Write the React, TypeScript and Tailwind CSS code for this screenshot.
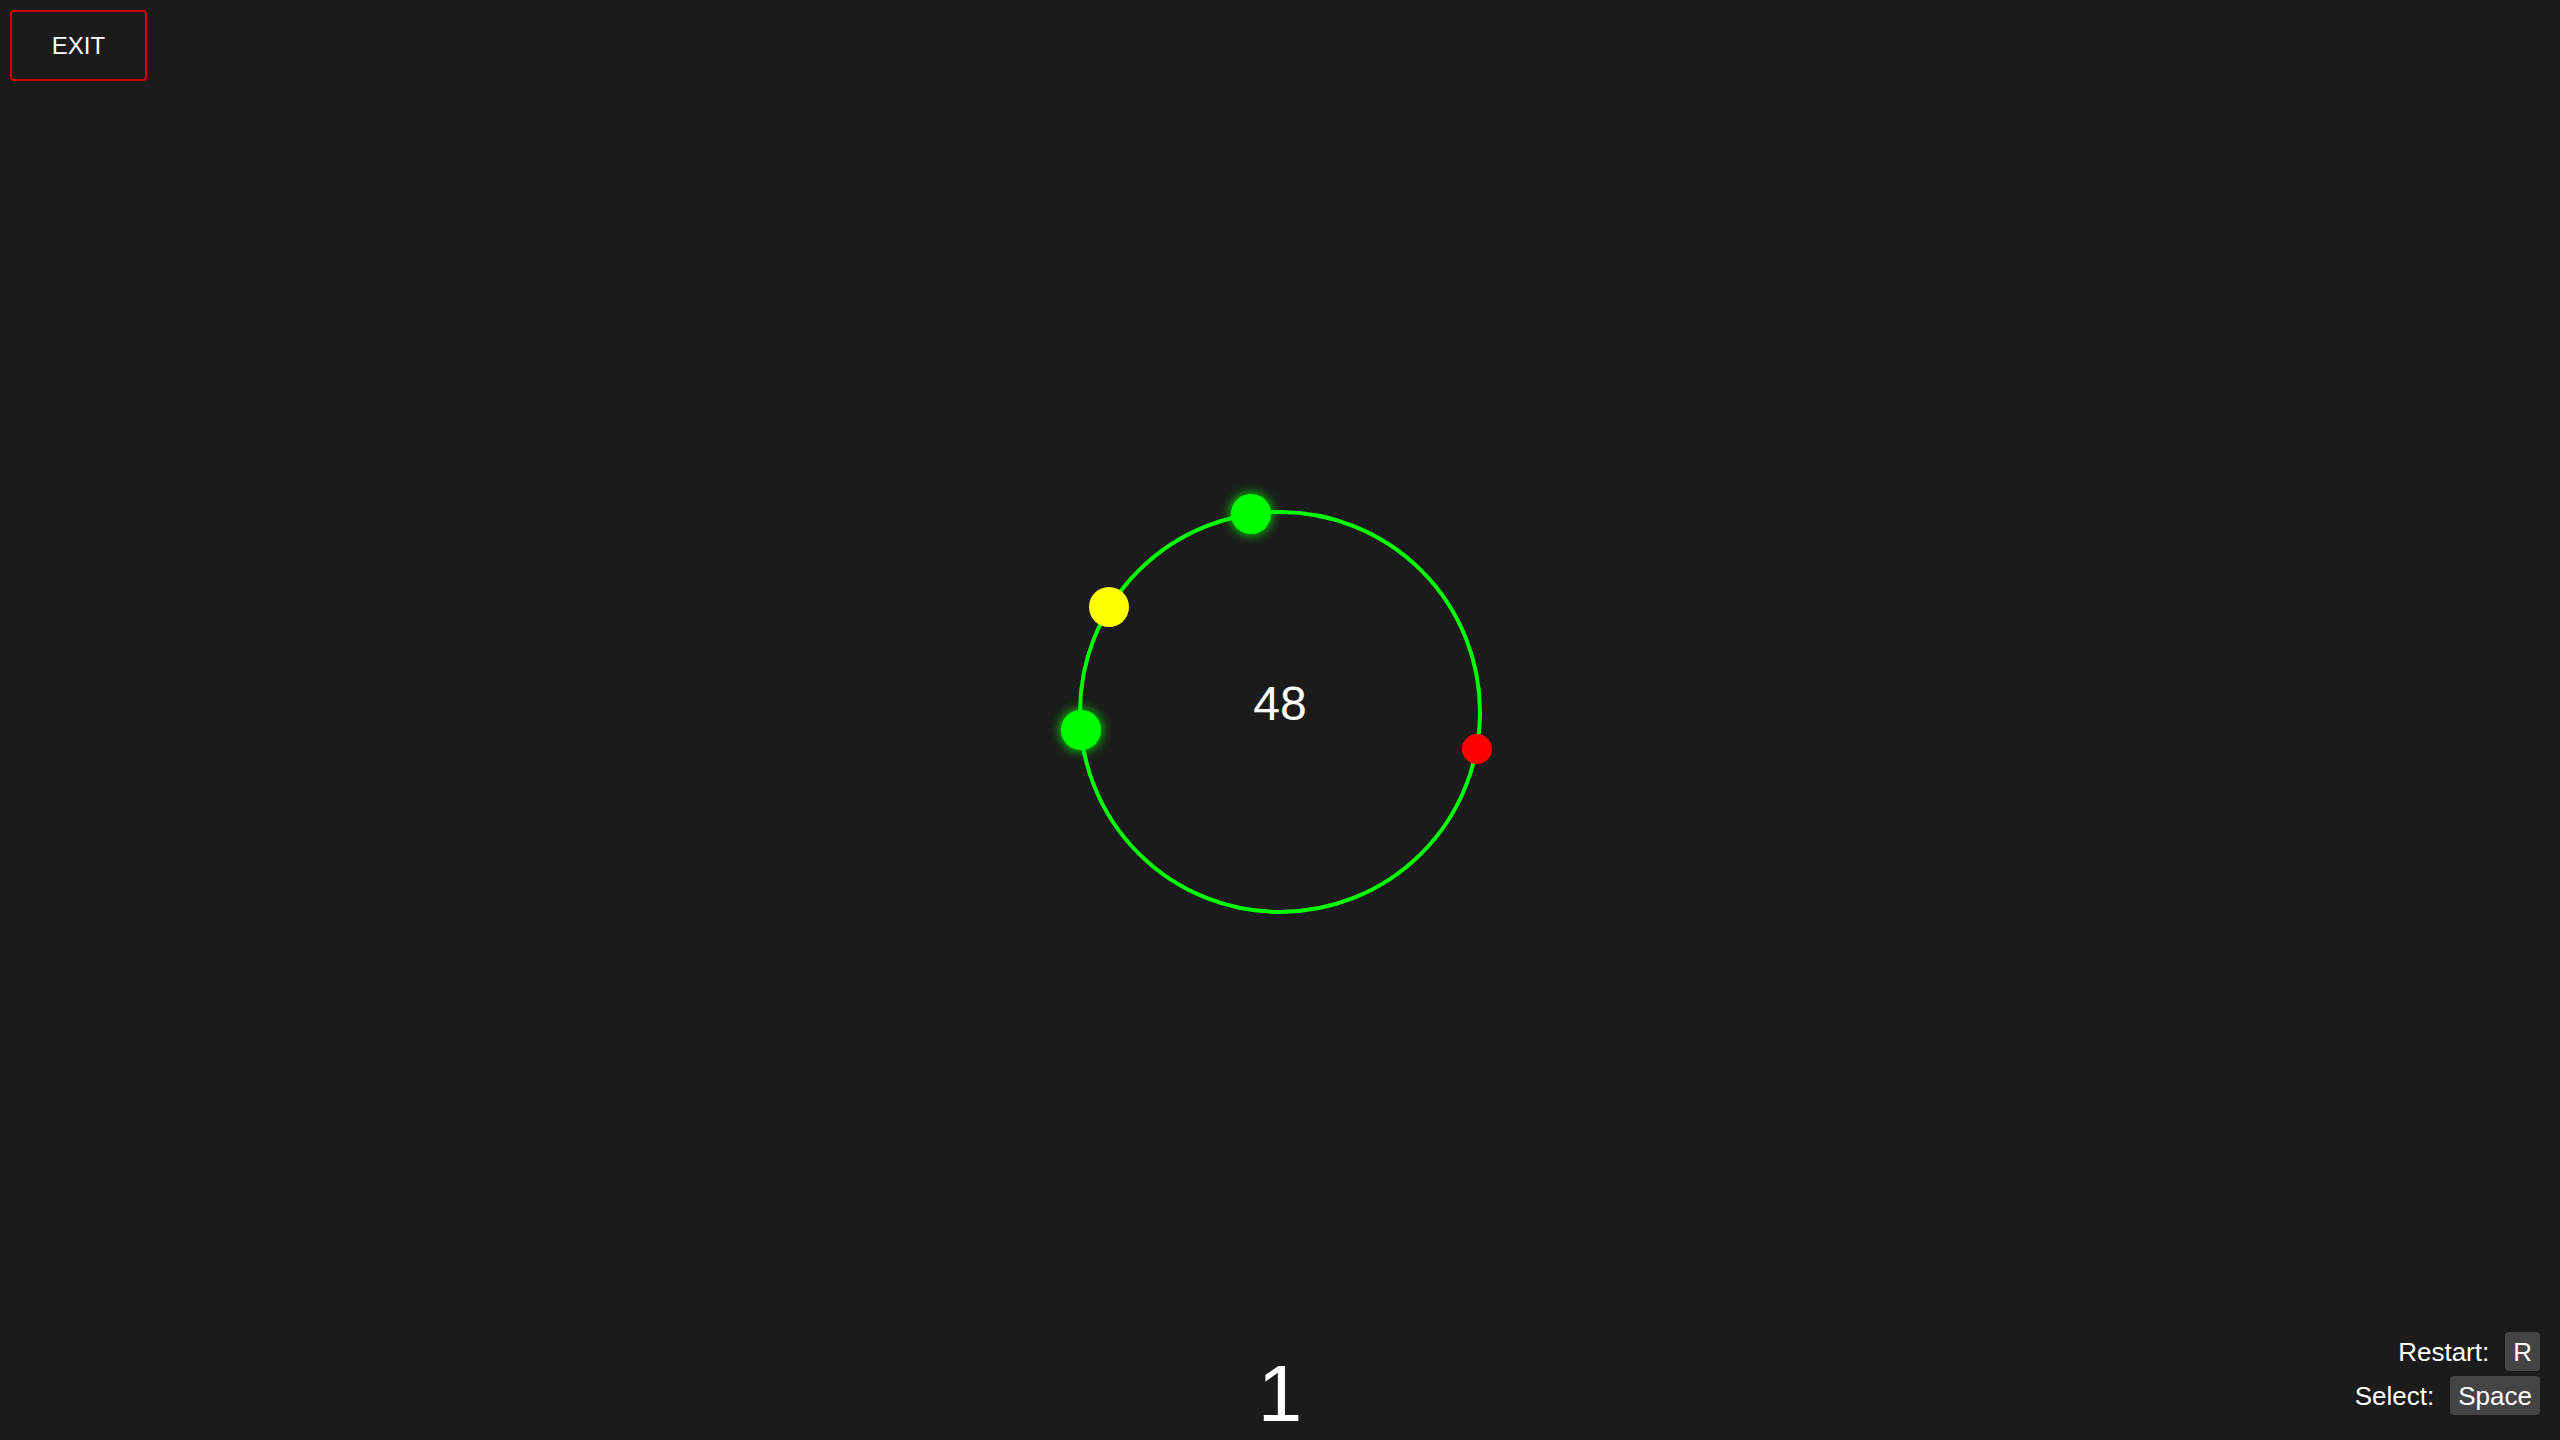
import React from "react";

const font = { fontFamily: '"Liberation Sans", Arial, sans-serif' };

export default function App() {
  return (
    <div
      className="relative flex h-screen w-full flex-col overflow-hidden bg-[#1b1b1b] text-white"
      style={font}
    >
      <button className="ml-[10px] mt-[10px] flex h-[71px] w-[137px] items-center justify-center self-start rounded-[4px] border-2 border-[#d00000] bg-transparent text-[24px] leading-none text-white">
        EXIT
      </button>

      <div className="mt-[421px] flex justify-center">
        <div className="relative h-[420px] w-[420px]">
          <svg width="420" height="420" viewBox="0 0 420 420" className="block">
            <circle cx="210" cy="210" r="200" fill="none" stroke="#00ff00" strokeWidth="4" />
          </svg>
          <div className="absolute inset-0 flex -translate-y-[8px] items-center justify-center text-[48px] leading-none">
            48
          </div>
          <div className="absolute left-[161px] top-[-8px] h-[40px] w-[40px] rounded-full bg-[#00ff00] shadow-[0_0_12px_#00ff00]" />
          <div className="absolute left-[19px] top-[85px] h-[40px] w-[40px] rounded-full bg-[#ffff00]" />
          <div className="absolute left-[-9px] top-[208px] h-[40px] w-[40px] rounded-full bg-[#00ff00] shadow-[0_0_12px_#00ff00]" />
          <div className="absolute left-[392px] top-[232px] h-[30px] w-[30px] rounded-full bg-[#ff0000]" />
        </div>
      </div>

      <div className="flex-1" />

      <div className="text-center text-[80px] leading-[1.15]">1</div>

      <div className="absolute bottom-[25px] right-[20px] flex flex-col items-end gap-[5px] text-[26px] leading-none">
        <div className="flex items-center gap-[16px]">
          <span>Restart:</span>
          <span className="flex h-[39px] items-center rounded-[4px] bg-[#444444] px-[8px]">R</span>
        </div>
        <div className="flex items-center gap-[16px]">
          <span>Select:</span>
          <span className="flex h-[39px] items-center rounded-[4px] bg-[#444444] px-[8px]">Space</span>
        </div>
      </div>
    </div>
  );
}
